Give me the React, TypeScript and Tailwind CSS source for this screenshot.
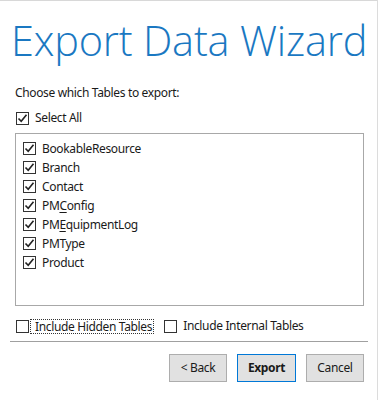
import React from "react";

const items = ["BookableResource", "Branch", "Contact", "PMConfig", "PMEquipmentLog", "PMType", "Product"];

function Check({ checked }: { checked: boolean }) {
  return (
    <span className="w-[13px] h-[13px] border border-[#333333] bg-white flex items-center justify-center shrink-0">
      {checked && (
        <svg width="11" height="11" viewBox="0 0 11 11">
          <path d="M1.5 5.5 L4.2 8.3 L9.5 1.8" fill="none" stroke="#222" strokeWidth="1.6" />
        </svg>
      )}
    </span>
  );
}

function Label({ text }: { text: string }) {
  if (text === "PMConfig") return <span>PM<u className="underline-offset-2">C</u>onfig</span>;
  if (text === "PMEquipmentLog") return <span>PM<u className="underline-offset-2">E</u>quipmentLog</span>;
  return <span>{text}</span>;
}

export default function App() {
  return (
    <div className="w-[380px] h-[400px] bg-white relative overflow-hidden text-[12px] tracking-[-0.35px] text-[#1a1a1a]" style={{ fontFamily: '"Noto Sans", "Open Sans", sans-serif' }}>
      <div className="absolute top-0 left-0 w-[377px] h-px bg-[#d8d8d8]" />
      <div className="absolute top-0 left-[377px] w-px h-[400px] bg-[#dcdcdc]" />
      <div className="flex flex-col w-[377px]">
        <div className="pl-[11px] pt-[16px] h-[72px] text-[#1a78c2] text-[41.5px] leading-[48px] font-light tracking-[-0.2px] whitespace-nowrap" style={{ fontFamily: '"Open Sans", sans-serif' }}>
          Export Data Wizard
        </div>
        <div className="pl-[15px] mt-[12px] h-[18px] leading-[18px]">Choose which Tables to export:</div>
        <div className="pl-[16px] mt-[8px] flex items-center gap-[6px] h-[16px]">
          <Check checked />
          <span>Select All</span>
        </div>
        <div className="ml-[15px] mt-[7px] w-[349px] h-[173px] border border-[#a8a8a8] pt-[5px] pl-[7px]">
          {items.map((t) => (
            <div key={t} className="flex items-center gap-[6px] h-[19px]">
              <Check checked />
              <Label text={t} />
            </div>
          ))}
        </div>
        <div className="pl-[16px] mt-[12px] flex items-center h-[16px]">
          <Check checked={false} />
          <span className="ml-[1px] pl-[4px] pr-[1px] border border-dotted border-[#333] h-[15px] leading-[13px]">Include Hidden Tables</span>
          <span className="ml-[10px]"><Check checked={false} /></span>
          <span className="ml-[6px]">Include Internal Tables</span>
        </div>
        <div className="ml-[10px] mt-[7px] w-[358px] h-px bg-[#a0a0a0]" />
        <div className="flex justify-end gap-[10px] pr-[13px] mt-[12px]">
          <button className="w-[58px] h-[28px] bg-[#e1e1e1] border border-[#adadad]">&lt; Back</button>
          <button className="w-[59px] h-[28px] bg-[#e1e1e1] border border-[#0078d7] font-bold">Export</button>
          <button className="w-[58px] h-[28px] bg-[#e1e1e1] border border-[#adadad]">Cancel</button>
        </div>
      </div>
    </div>
  );
}
